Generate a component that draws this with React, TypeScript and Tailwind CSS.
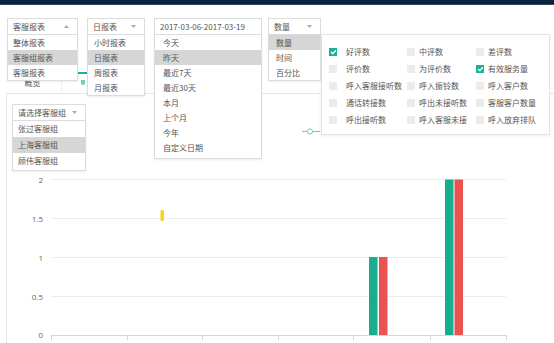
import React from "react";

const FONT = { fontFamily: '"Noto Sans CJK SC", "Noto Sans", sans-serif' };

function Caret({ up }: { up?: boolean }) {
  return (
    <svg width="5" height="3" viewBox="0 0 5 3" className="shrink-0">
      {up ? <path d="M0 3 L2.5 0 L5 3 Z" fill="#aaa" /> : <path d="M0 0 L5 0 L2.5 3 Z" fill="#aaa" />}
    </svg>
  );
}

function Dropdown({
  w,
  label,
  items,
  hi,
  up,
  noCaret,
  itemH = 15,
  listPad = 0,
  itemPl = 6,
  children,
}: {
  w: number;
  label: string;
  items: string[];
  hi: number;
  up?: boolean;
  noCaret?: boolean;
  itemH?: number;
  listPad?: number;
  itemPl?: number;
  children?: React.ReactNode;
}) {
  return (
    <div className="relative shrink-0" style={{ width: w }}>
      <div className="h-[17px] border border-[#dcdcdc] bg-white flex items-center justify-between pl-[5px] pr-[8px] text-[8px] text-[#555]">
        <span className="leading-none whitespace-nowrap">{label}</span>
        {!noCaret && <Caret up={up} />}
      </div>
      <div
        className="absolute left-0 top-full w-full bg-white border border-t-0 border-[#dcdcdc] shadow-[0_1px_2px_rgba(0,0,0,0.08)] z-20"
        style={{ paddingBottom: listPad }}
      >
        {items.map((it, i) => (
          <div
            key={it}
            className={`flex items-center text-[8px] leading-none text-[#555] whitespace-nowrap ${i === hi ? "bg-[#d6d6d6]" : ""}`}
            style={{ height: itemH, paddingLeft: itemPl }}
          >
            {it}
          </div>
        ))}
      </div>
      {children}
    </div>
  );
}

const checks: [string, boolean][] = [
  ["好评数", true],
  ["中评数", false],
  ["差评数", false],
  ["评价数", false],
  ["为评价数", false],
  ["有效服务量", true],
  ["呼入客服接听数", false],
  ["呼入振铃数", false],
  ["呼入客户数", false],
  ["通话转接数", false],
  ["呼出未接听数", false],
  ["客服客户数量", false],
  ["呼出接听数", false],
  ["呼入客服未接", false],
  ["呼入放弃排队", false],
];

function Box({ on }: { on: boolean }) {
  return on ? (
    <span className="w-[8px] h-[8px] bg-[#1bb394] flex items-center justify-center shrink-0">
      <svg width="7" height="6" viewBox="0 0 7 6">
        <path d="M1 3 L2.8 4.6 L6 1.2" stroke="white" strokeWidth="1.3" fill="none" />
      </svg>
    </span>
  ) : (
    <span className="w-[8px] h-[8px] bg-[#ebebeb] shrink-0" />
  );
}

function CheckPanel() {
  return (
    <div className="absolute left-full top-[16px] w-[229px] h-[101px] bg-white border border-[#e3e3e3] shadow-[0_1px_3px_rgba(0,0,0,0.08)] z-10 pt-[8px] pl-[7px]">
      <div className="grid grid-cols-[78px_69px_1fr]">
        {checks.map(([t, on], i) => {
          const col = i % 3;
          return (
            <div key={t} className="h-[17px] flex items-center">
              <Box on={on} />
              <span
                className="text-[8px] leading-none text-[#555] whitespace-nowrap"
                style={{ marginLeft: col === 0 ? 9 : 4 }}
              >
                {t}
              </span>
            </div>
          );
        })}
      </div>
    </div>
  );
}

function Chart() {
  const ys = [
    { v: "2", y: 179.5 },
    { v: "1.5", y: 218.5 },
    { v: "1", y: 257.5 },
    { v: "0.5", y: 296.5 },
  ];
  const ticks = [51, 127, 202, 278, 353, 430, 506];
  return (
    <svg width="547" height="222" className="block">
      <g transform="translate(-7 -121)">
        {ys.map((l) => (
          <g key={l.v}>
            <line x1="51" x2="506" y1={l.y} y2={l.y} stroke="#ececec" strokeWidth="1" />
            <text x="43" y={l.y + 3} textAnchor="end" fontSize="8" fill="#666" fontFamily='"Open Sans", sans-serif'>
              {l.v}
            </text>
          </g>
        ))}
        <text x="43" y="338" textAnchor="end" fontSize="8" fill="#666" fontFamily='"Open Sans", sans-serif'>
          0
        </text>
        <line x1="51" x2="506" y1="335.5" y2="335.5" stroke="#d6d6d6" />
        {ticks.map((x) => (
          <line key={x} x1={x + 0.5} x2={x + 0.5} y1="335" y2="340" stroke="#d6d6d6" />
        ))}
        {/* legend marker */}
        <line x1="302" x2="320" y1="131.5" y2="131.5" stroke="#6fc9c0" strokeWidth="1" />
        <circle cx="310" cy="131.5" r="2.6" fill="white" stroke="#6fc9c0" strokeWidth="1" />
        {/* yellow */}
        <rect x="160.5" y="210" width="3.5" height="11" rx="1" fill="#f4d423" />
        {/* bars */}
        <rect x="369" y="257" width="8.5" height="78" fill="#18ad8c" />
        <rect x="379" y="257" width="8.5" height="78" fill="#ea534f" />
        <rect x="445" y="179.5" width="8.5" height="155.5" fill="#18ad8c" />
        <rect x="454.5" y="179.5" width="8.5" height="155.5" fill="#ea534f" />
      </g>
    </svg>
  );
}

export default function App() {
  return (
    <div className="relative w-[554px] h-[343px] bg-white overflow-hidden" style={FONT}>
      <div className="h-[5px] bg-[#0b2240] border-b border-[#33465f]" />
      <div className="flex items-start pl-[7px] pt-[13px] gap-[9px] relative z-20">
        <Dropdown w={71} label="客服报表" up items={["整体报表", "客服组报表", "客服报表"]} hi={1} itemPl={5} />
        <Dropdown w={58} label="日报表" items={["小时报表", "日报表", "周报表", "月报表"]} hi={1} itemPl={6} />
        <Dropdown
          w={108}
          label="2017-03-06-2017-03-19"
          noCaret
          items={["今天", "昨天", "最近7天", "最近30天", "本月", "上个月", "今年", "自定义日期"]}
          hi={1}
          itemPl={8}
          listPad={3}
        />
        <div className="ml-[-3px]">
          <Dropdown w={53} label="数量" items={["数量", "时间", "百分比"]} hi={0} itemPl={7}>
            <CheckPanel />
          </Dropdown>
        </div>
      </div>
      {/* tabs row */}
      <div className="relative h-[58px] flex items-end pl-[17px] pb-[3px]">
        <div className="w-[31px] h-[14px] flex items-center justify-center text-[8px] leading-none text-[#555]">概览</div>
        <div className="absolute left-[78px] top-[37px] w-[9px] h-[1.5px] bg-[#1bb394]" />
        <div className="absolute left-[81px] top-[45px] w-[4px] h-[5px] bg-[#6fd1b4] rounded-b-[2px]" />
        <div className="absolute left-[61px] top-[41px] w-px h-[15px] bg-[#eeeeee]" />
      </div>
      {/* card */}
      <div className="ml-[6px] border-l border-t border-[#e6e6e6]">
        <div className="pt-[10px] pl-[5px] relative z-10">
          <Dropdown w={74} label="请选择客服组" items={["张过客服组", "上海客服组", "顾伟客服组"]} hi={1} itemH={16} itemPl={5} listPad={1} />
        </div>
        <Chart />
      </div>
    </div>
  );
}
